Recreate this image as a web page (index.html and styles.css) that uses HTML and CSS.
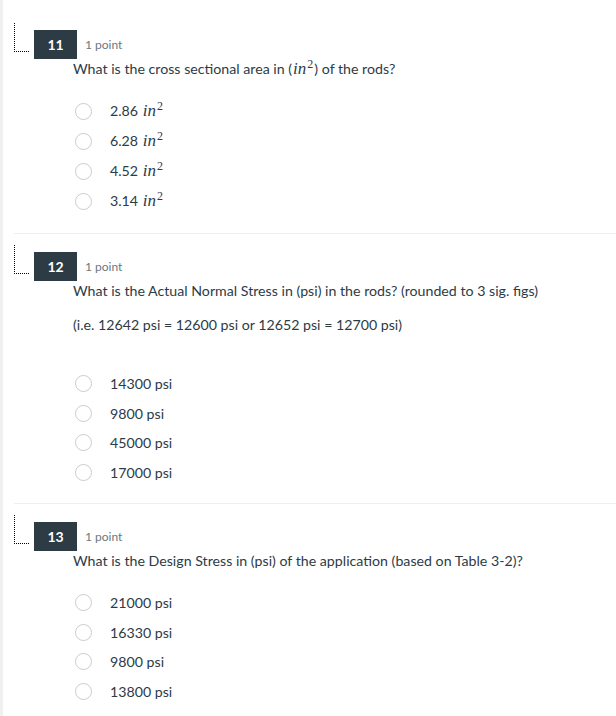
FILE: index.html
```html
<!DOCTYPE html>
<html>
<head>
<meta charset="utf-8">
<link rel="stylesheet" href="styles.css">
</head>
<body>
<div class="page">
  <section class="question first">
    <div class="qhead">
      <span class="focus"></span>
      <span class="badge">11</span>
      <span class="points">1 point</span>
    </div>
    <div class="qbody">
      <p class="qtext">What is the cross sectional area in (<span class="math">in<sup>2</sup></span>) of the rods?</p>
      <ul class="options gap-s">
        <li class="opt tall"><span class="radio"></span><span class="label">2.86 <span class="math">in<sup>2</sup></span></span></li>
        <li class="opt tall"><span class="radio"></span><span class="label">6.28 <span class="math">in<sup>2</sup></span></span></li>
        <li class="opt tall"><span class="radio"></span><span class="label">4.52 <span class="math">in<sup>2</sup></span></span></li>
        <li class="opt tall"><span class="radio"></span><span class="label">3.14 <span class="math">in<sup>2</sup></span></span></li>
      </ul>
    </div>
  </section>
  <section class="question second">
    <div class="qhead">
      <span class="focus"></span>
      <span class="badge">12</span>
      <span class="points">1 point</span>
    </div>
    <div class="qbody">
      <p class="qtext">What is the Actual Normal Stress in (psi) in the rods? (rounded to 3 sig. figs)</p>
      <p class="qtext follow">(i.e. 12642 psi = 12600 psi or 12652 psi = 12700 psi)</p>
      <ul class="options gap-l">
        <li class="opt"><span class="radio"></span><span class="label">14300 psi</span></li>
        <li class="opt"><span class="radio"></span><span class="label">9800 psi</span></li>
        <li class="opt"><span class="radio"></span><span class="label">45000 psi</span></li>
        <li class="opt"><span class="radio"></span><span class="label">17000 psi</span></li>
      </ul>
    </div>
  </section>
  <section class="question last">
    <div class="qhead">
      <span class="focus"></span>
      <span class="badge">13</span>
      <span class="points">1 point</span>
    </div>
    <div class="qbody">
      <p class="qtext">What is the Design Stress in (psi) of the application (based on Table 3-2)?</p>
      <ul class="options gap-s">
        <li class="opt"><span class="radio"></span><span class="label">21000 psi</span></li>
        <li class="opt"><span class="radio"></span><span class="label">16330 psi</span></li>
        <li class="opt"><span class="radio"></span><span class="label">9800 psi</span></li>
        <li class="opt"><span class="radio"></span><span class="label">13800 psi</span></li>
      </ul>
    </div>
  </section>
</div>
</body>
</html>
```

FILE: styles.css
```css
html, body {
  margin: 0;
  padding: 0;
  background: #ffffff;
}
body {
  font-family: Lato, "Open Sans", sans-serif;
  color: #2d3b45;
  width: 616px;
  height: 716px;
  overflow: hidden;
}
.page {
  border-left: 3px solid #f0f0f0;
  padding-left: 11px;
  padding-top: 12px;
  min-height: 716px;
  box-sizing: border-box;
}
.question {
  padding-top: 11px;
  padding-bottom: 15px;
  border-bottom: 1px solid #eeeeee;
}
.question.first {
  padding-bottom: 17px;
}
.question.second {
  padding-bottom: 16px;
}
.question.last {
  border-bottom: none;
}
.qhead {
  display: flex;
  align-items: flex-start;
}
.focus {
  width: 15px;
  height: 29px;
  border-left: 1px dotted #000;
  border-bottom: 1px dotted #000;
  box-sizing: border-box;
  margin-right: 5px;
}
.badge {
  margin-top: 7px;
  width: 43px;
  height: 29px;
  background: #2d3b45;
  color: #ffffff;
  font-size: 14px;
  font-weight: 700;
  display: flex;
  align-items: center;
  justify-content: center;
}
.points {
  margin-top: 7px;
  height: 29px;
  display: flex;
  align-items: center;
  margin-left: 8px;
  font-size: 12px;
  color: #6b7780;
}
.qbody {
  margin-left: 59px;
}
.qtext {
  margin: 0;
  font-size: 14.2px;
  line-height: 20px;
}
.qtext.follow {
  margin-top: 14px;
}
.options {
  list-style: none;
  margin: 0;
  padding: 0;
}
.options.gap-s {
  margin-top: 17px;
}
.options.gap-l {
  margin-top: 34px;
}
.opt {
  display: flex;
  align-items: center;
  height: 29.5px;
  font-size: 14.2px;
}
.opt.tall {
  height: 30px;
}
.radio {
  width: 17px;
  height: 17px;
  border: 1px solid #c7cdd1;
  border-radius: 50%;
  box-sizing: border-box;
  margin-left: 2px;
  margin-right: 18px;
  background: #fff;
}
.math {
  font-family: "Liberation Serif", "DejaVu Serif", serif;
  font-style: italic;
  font-size: 17px;
  padding: 0 1px;
}
.math sup {
  font-style: normal;
  font-size: 12px;
  line-height: 0;
  vertical-align: 6px;
  margin-left: 1px;
}
```
